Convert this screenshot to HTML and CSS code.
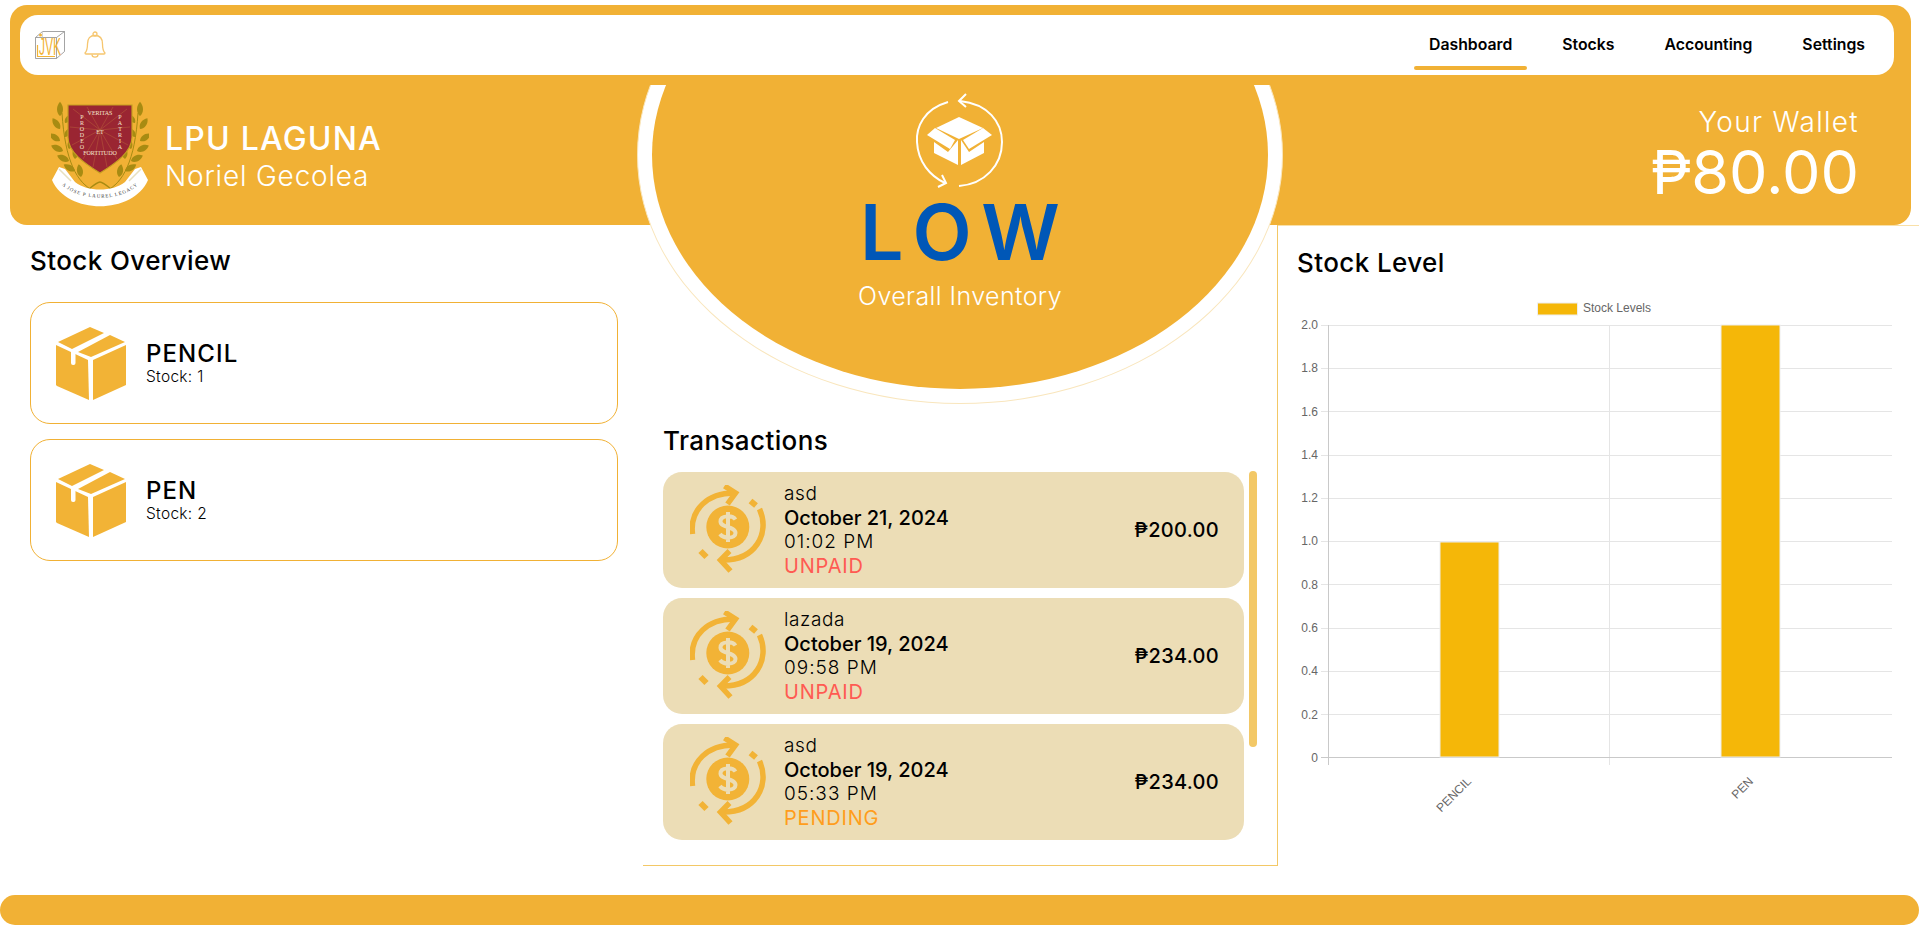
FILE: index.html
```html
<!DOCTYPE html>
<html lang="en">
<head>
<meta charset="utf-8">
<title>Dashboard</title>
<link rel="stylesheet" href="styles.css">
</head>
<body>
<svg class="defs" width="0" height="0" aria-hidden="true">
  <defs>
    <symbol id="box" viewBox="0 0 70 73">
      <path d="M0 18 32 33 33 73 1 59 0 58Z" fill="#f2b336"/>
      <path d="M70 18 37 33 37 73 70 58Z" fill="#f2b336"/>
      <path d="M2 15 34 0 48 6 16 22Z" fill="#f2b336"/>
      <path d="M22 25 54 8 69 15 35 30Z" fill="#f2b336"/>
      <rect x="15" y="22" width="4.5" height="16" rx="2" fill="#fff"/>
    </symbol>
    <symbol id="money" viewBox="0 0 80 90">
      <g transform="translate(-19.5 -14)" fill="none" stroke="#f2b336" stroke-width="5.500">
        <path d="M22 63C19 38 38 22 63 22"/>
        <path d="M54 15 65 22 57 33"/>
        <path d="M80 30 85.5 34.500" stroke-width="6"/>
        <path d="M89 38C100 62 85 90 51 89"/>
        <path d="M59 80 50 89 60 100"/>
        <path d="M30 80 36 86" stroke-width="6"/>
        <circle cx="57.300" cy="56" r="21.500" fill="#f2b336" stroke="none"/>
        <path d="M65 48.500C62 44 50 44 50 50.500 50 57 65 55 65 62 65 68 53 68 49.500 63M57.500 41V71" stroke="#ecddb6" stroke-width="4"/>
      </g>
    </symbol>
  </defs>
</svg>

<header class="top">
  <nav class="nav">
    <div class="nav-icons">
      <svg class="jvk" viewBox="0 0 30 28">
        <path d="M.5 6.500H21.500V27.500H.5ZM.5 6.500 7.500.5H29.500L21.500 6.500M29.500.5V20.500L21.500 27.500" fill="none" stroke="#8d8d8d" stroke-width=".8"/>
        <path d="M7.500.5V6.500" fill="none" stroke="#c9c9c9" stroke-width=".8"/>
        <circle cx="5.500" cy="4" r="1.500" fill="#f2b336"/>
        <path d="M2.500 14V25.500H20" fill="none" stroke="#f2b336" stroke-width="1.200"/>
        <text class="jvk-text" transform="translate(4 24) scale(.75 1.500)">JVK</text>
      </svg>
      <svg class="bell" viewBox="0 0 22 27" fill="none" stroke="#f6c66f" stroke-width="1.300">
        <path d="M1 22C3 20 3.500 18 3.500 13 3.500 7.500 6 4.500 11 4.500S18.500 7.500 18.500 13C18.500 18 19 20 21 22 21 22.500 20.500 23 20 23H2C1.500 23 1 22.500 1 22Z"/>
        <circle cx="11" cy="3" r="2"/>
        <path d="M8 23.500C8 27 14 27 14 23.500"/>
      </svg>
    </div>
    <ul class="links">
      <li class="link active">Dashboard</li>
      <li class="link">Stocks</li>
      <li class="link">Accounting</li>
      <li class="link">Settings</li>
    </ul>
  </nav>
  <div class="brand-row">
    <div class="brand">
      <svg class="crest" viewBox="0 0 98 108">
        <defs>
          <path id="leaf" d="M0 0C-4 -3 -4 -9 0 -13 4 -9 4 -3 0 0Z" fill="#a78b12"/>
          <path id="ribbon-arc" d="M6 78C22 103 76 103 92 78"/>
        </defs>
        <g id="laurel-l">
          <path d="M43 90C26 82 14 60 11 12" fill="none" stroke="#a78b12" stroke-width="1"/>
          <use href="#leaf" transform="translate(9 15) scale(1 1.100)"/>
          <use href="#leaf" transform="translate(9 28) rotate(-35)"/>
          <use href="#leaf" transform="translate(14 22) rotate(35) scale(.8)"/>
          <use href="#leaf" transform="translate(9 40) rotate(-55)"/>
          <use href="#leaf" transform="translate(14 36) rotate(30) scale(.8)"/>
          <use href="#leaf" transform="translate(12 50) rotate(-65)"/>
          <use href="#leaf" transform="translate(18 48) rotate(15) scale(.9)"/>
          <use href="#leaf" transform="translate(18 60) rotate(-65)"/>
          <use href="#leaf" transform="translate(24 58) rotate(5)"/>
          <use href="#leaf" transform="translate(24 70) rotate(-60)"/>
          <use href="#leaf" transform="translate(30 76) rotate(-10)"/>
        </g>
        <use href="#laurel-l" transform="translate(98 0) scale(-1 1)"/>
        <path d="M17 4H81V36C81 51 65 62 49 72 33 62 17 51 17 36Z" fill="#9a2532" stroke="#c5a021" stroke-width="1.200"/>
        <g stroke="#b9603a" stroke-width=".5">
          <path d="M49 29 22 8M49 29 36 6M49 29 62 6M49 29 76 8M49 29 19 26M49 29 79 26M49 29 21 44M49 29 77 44M49 29 32 58M49 29 66 58M49 29 42 66M49 29 56 66"/>
        </g>
        <text class="crest-t" x="49" y="14" text-anchor="middle">VERITAS</text>
        <text class="crest-t" x="49" y="33" text-anchor="middle">ET</text>
        <text class="crest-t" x="49" y="54" text-anchor="middle">FORTITUDO</text>
        <text class="crest-t" text-anchor="middle"><tspan x="31" y="18">P</tspan><tspan x="31" dy="6">R</tspan><tspan x="31" dy="6">O</tspan><tspan x="31" dy="6">D</tspan><tspan x="31" dy="6">E</tspan><tspan x="31" dy="6">O</tspan></text>
        <text class="crest-t" text-anchor="middle"><tspan x="69" y="18">P</tspan><tspan x="69" dy="6">A</tspan><tspan x="69" dy="6">T</tspan><tspan x="69" dy="6">R</tspan><tspan x="69" dy="6">I</tspan><tspan x="69" dy="6">A</tspan></text>
        <path d="M38 88C44 83 48 81 49 81 50 81 54 83 60 88" fill="none" stroke="#a78b12" stroke-width="1.300"/>
        <path d="M8 66 14 68 24 81C36 91 62 91 74 81L84 68 90 66 97 79C82 114 16 114 1 79Z" fill="#fff"/>
        <path d="M8 68 20 80M90 68 78 80" stroke="#e8e0c0" stroke-width="1.500"/>
        <text class="crest-r"><textPath href="#ribbon-arc" startOffset="50%" text-anchor="middle">A JOSE P LAUREL LEGACY</textPath></text>
      </svg>
      <div class="brand-text">
        <div class="org">LPU LAGUNA</div>
        <div class="user">Noriel Gecolea</div>
      </div>
    </div>
    <div class="wallet">
      <div class="wallet-label">Your Wallet</div>
      <div class="wallet-amount">₱80.00</div>
    </div>
  </div>
</header>

<div class="hero-clip">
  <div class="hero-ring">
    <div class="hero">
      <svg class="hero-icon" viewBox="0 0 140 110">
        <g fill="none" stroke="#fff" stroke-width="2">
          <path d="M58 12C34 19 26 37 27 52 28 72 40 86 55 93"/>
          <path d="M52 85 56 93 48 97"/>
          <path d="M70 11C98 14 112 32 112 52 112 75 95 94 69 96"/>
          <path d="M76 4 69 11 76 17"/>
        </g>
        <g fill="#fff">
          <path d="M69 27 93 38 69 49 46 38Z"/>
          <path d="M45 38 65 50 60 59 37 45Z"/>
          <path d="M93 38 102 45 79 59 73 50Z"/>
          <path d="M44 52 58 62 68 50V75L44 63Z"/>
          <path d="M71 50 79 62 94 52V63L71 75Z"/>
        </g>
      </svg>
      <div class="level">LOW</div>
      <div class="level-label">Overall Inventory</div>
    </div>
  </div>
</div>

<main class="main">
  <section class="col-left">
    <h2 class="heading">Stock Overview</h2>
    <div class="stock-card">
      <svg class="stock-icon"><use href="#box"/></svg>
      <div>
        <div class="stock-name">PENCIL</div>
        <div class="stock-qty">Stock: 1</div>
      </div>
    </div>
    <div class="stock-card">
      <svg class="stock-icon"><use href="#box"/></svg>
      <div>
        <div class="stock-name">PEN</div>
        <div class="stock-qty">Stock: 2</div>
      </div>
    </div>
  </section>

  <section class="col-center">
    <h2 class="heading">Transactions</h2>
    <div class="tx-wrap">
      <div class="tx-list">
        <article class="tx">
          <svg class="tx-icon"><use href="#money"/></svg>
          <div class="tx-info">
            <div class="tx-name">asd</div>
            <div class="tx-date">October 21, 2024</div>
            <div class="tx-time">01:02 PM</div>
            <div class="tx-status unpaid">UNPAID</div>
          </div>
          <div class="tx-price">₱200.00</div>
        </article>
        <article class="tx">
          <svg class="tx-icon"><use href="#money"/></svg>
          <div class="tx-info">
            <div class="tx-name">lazada</div>
            <div class="tx-date">October 19, 2024</div>
            <div class="tx-time">09:58 PM</div>
            <div class="tx-status unpaid">UNPAID</div>
          </div>
          <div class="tx-price">₱234.00</div>
        </article>
        <article class="tx">
          <svg class="tx-icon"><use href="#money"/></svg>
          <div class="tx-info">
            <div class="tx-name">asd</div>
            <div class="tx-date">October 19, 2024</div>
            <div class="tx-time">05:33 PM</div>
            <div class="tx-status pending">PENDING</div>
          </div>
          <div class="tx-price">₱234.00</div>
        </article>
      </div>
      <div class="scroll-thumb"></div>
    </div>
  </section>

  <section class="col-right">
    <h2 class="heading">Stock Level</h2>
    <svg class="chart" viewBox="1290 290 629 530" width="629" height="530">
      <rect class="legend-box" x="1537.500" y="303" width="40" height="12"/>
      <text class="tick" x="1583" y="312">Stock Levels</text>
      <g class="grid">
        <path d="M1321 325.500H1892M1321 368.500H1892M1321 411.500H1892M1321 455.500H1892M1321 498.500H1892M1321 541.500H1892M1321 584.500H1892M1321 628.500H1892M1321 671.500H1892M1321 714.500H1892"/>
        <path d="M1609.500 325V765"/>
      </g>
      <g class="axis">
        <path d="M1328.500 325V765M1321 757.500H1892"/>
      </g>
      <rect class="bar" x="1440" y="542" width="59" height="215"/>
      <rect class="bar" x="1721" y="325" width="59" height="432"/>
      <g class="tick" text-anchor="end">
        <text x="1318" y="329">2.0</text>
        <text x="1318" y="372">1.8</text>
        <text x="1318" y="416">1.6</text>
        <text x="1318" y="459">1.4</text>
        <text x="1318" y="502">1.2</text>
        <text x="1318" y="545">1.0</text>
        <text x="1318" y="589">0.8</text>
        <text x="1318" y="632">0.6</text>
        <text x="1318" y="675">0.4</text>
        <text x="1318" y="719">0.2</text>
        <text x="1318" y="762">0</text>
        <text transform="translate(1472 782) rotate(-45)">PENCIL</text>
        <text transform="translate(1754 782) rotate(-45)">PEN</text>
      </g>
    </svg>
  </section>
</main>

<footer class="footer"></footer>
</body>
</html>
```
FILE: styles.css
```css
* { box-sizing: border-box; }
html, body { margin: 0; padding: 0; }
body {
  position: relative;
  width: 1919px;
  height: 936px;
  overflow: hidden;
  background: #fff;
  font-family: Inter, "Open Sans", sans-serif;
  color: #000;
}
.defs { position: absolute; }

.top {
  margin: 5px 8px 0 10px;
  height: 220px;
  background: #f1b135;
  border-radius: 17px;
  padding: 10px 17px 0 10px;
}
.nav {
  height: 60px;
  background: #fff;
  border-radius: 18px;
  display: flex;
  justify-content: space-between;
  padding: 0 14px 0 15px;
}
.nav-icons { display: flex; align-items: center; gap: 19px; padding-bottom: 1px; }
.jvk { width: 30px; height: 28px; }
.jvk-text { font: 400 16px "Liberation Sans", sans-serif; fill: #f2b336; }
.bell { width: 22px; height: 27px; }
.links { display: flex; gap: 20px; list-style: none; margin: 0; padding: 0; }
.link {
  position: relative;
  padding: 0 15px;
  line-height: 60px;
  font-size: 15.800px;
  font-weight: 600;
}
.link.active::after {
  content: "";
  position: absolute;
  left: 0;
  right: 0;
  bottom: 5px;
  height: 4px;
  border-radius: 2px;
  background: #f1b135;
}

.brand-row {
  height: 150px;
  display: flex;
  justify-content: space-between;
  align-items: center;
  padding: 9px 35px 0 31px;
  color: #fff;
}
.brand { display: flex; align-items: center; gap: 16px; }
.crest { width: 98px; height: 108px; }
.crest-t { font: 6px "Liberation Serif", serif; fill: #f4e6d0; }
.crest-r { font: 5px "Liberation Serif", serif; fill: #333; letter-spacing: .9px; }
.brand-text { padding-top: 4px; }
.org { font-size: 32px; font-weight: 500; line-height: 38px; letter-spacing: 1.200px; }
.user { font-size: 28px; font-weight: 300; line-height: 36px; letter-spacing: .8px; }
.wallet { text-align: right; margin-top: 0; }
.wallet-label { font-size: 28px; font-weight: 300; line-height: 34px; letter-spacing: 1.300px; }
.wallet-amount { font-size: 61px; font-weight: 400; line-height: 66px; letter-spacing: 0; }

.hero-clip {
  position: absolute;
  left: 637px;
  top: 85px;
  width: 646px;
  height: 321px;
  overflow: hidden;
}
.hero-ring {
  position: absolute;
  left: 0;
  top: -179px;
  width: 646px;
  height: 498px;
  padding: 14px;
  border: 1px solid #f9e6bd;
  border-radius: 50%;
  background: #fff;
}
.hero {
  height: 468px;
  border-radius: 50%;
  background: #f1b135;
  display: flex;
  flex-direction: column;
  align-items: center;
  padding-top: 169px;
  color: #fff;
}
.hero-icon { width: 140px; height: 110px; flex: none; }
.level {
  font-size: 77px;
  font-weight: 600;
  line-height: 84px;
  letter-spacing: 11px;
  margin-right: -11px;
  color: #0057b7;
  margin-top: -10px;
}
.level-label { font-size: 25px; font-weight: 300; line-height: 30px; margin-top: 7px; letter-spacing: .4px; }

.main {
  height: 641px;
  display: grid;
  grid-template-columns: 643px 635px 641px;
}
.heading { margin: 0; font-size: 26px; font-weight: 500; line-height: 32px; letter-spacing: .4px; }
.col-left { padding: 20px 25px 0 30px; }
.col-left .heading { margin-bottom: 25px; }
.stock-card {
  height: 122px;
  margin-bottom: 15px;
  border: 1px solid #f1b135;
  border-radius: 20px;
  display: flex;
  align-items: center;
  padding-left: 25px;
  gap: 20px;
}
.stock-icon { width: 70px; height: 73px; flex: none; }
.stock-name { font-size: 24px; font-weight: 500; line-height: 28px; letter-spacing: 1.100px; }
.stock-qty { font-size: 15.500px; line-height: 18px; font-weight: 300; letter-spacing: .3px; }

.col-center {
  padding: 200px 0 0 20px;
  border-right: 1px solid #f3c866;
  border-bottom: 1px solid #f3c866;
}
.col-center .heading { margin-bottom: 15px; }
.tx-wrap { display: flex; gap: 5px; align-items: flex-start; }
.tx-list { width: 581px; display: flex; flex-direction: column; gap: 10px; }
.tx {
  height: 116px;
  background: #ecddb6;
  border-radius: 19px;
  display: flex;
  align-items: center;
  padding: 0 25px 0 27px;
}
.tx-icon { width: 80px; height: 90px; flex: none; margin-right: 14px; }
.tx-info { flex: 1; }
.tx-name, .tx-time, .tx-status { font-size: 19px; line-height: 24px; font-weight: 300; }
.tx-name { letter-spacing: .6px; }
.tx-time { letter-spacing: 1px; }
.tx-status { font-size: 20px; font-weight: 400; letter-spacing: .8px; }
.tx-date { font-size: 20px; line-height: 24px; font-weight: 500; }
.tx-price { font-size: 20px; font-weight: 500; letter-spacing: .3px; }
.unpaid { color: #ff5a52; }
.pending { color: #ff9d1c; }
.scroll-thumb { width: 8px; height: 276px; border-radius: 4px; background: #f3c866; margin-top: -1px; }

.col-right { padding: 21px 0 0 19px; border-top: 1px solid #f9e0a8; }
.chart { display: block; margin: 11px 0 0 -7px; }
.tick { font: 12px "Liberation Sans", Arial, sans-serif; fill: #666; }
.legend-box { fill: #f5b708; stroke: #eee; stroke-width: 1; }
.grid path { fill: none; stroke: #e5e5e5; stroke-width: 1; }
.axis path { fill: none; stroke: #c9c9c9; stroke-width: 1; }
.bar { fill: #f5b708; stroke: #eee; stroke-width: 1; }

.footer {
  height: 30px;
  margin-top: 29px;
  border-radius: 15px;
  background: #f1b135;
}
```
